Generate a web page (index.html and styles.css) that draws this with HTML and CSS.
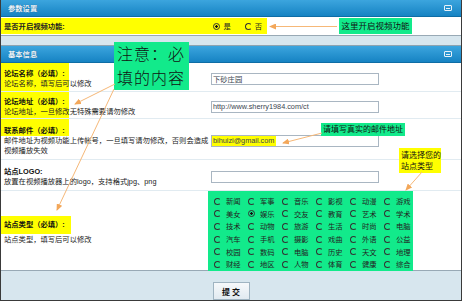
FILE: index.html
```
<!DOCTYPE html>
<html lang="zh-CN">
<head>
  <meta charset="UTF-8" />
  <title>参数设置</title>
  <link rel="stylesheet" href="styles.css">
</head>
<body>
<div class="page">

  <div class="bar"><span>参数设置</span><i class="fold"></i></div>
  <div class="switch">
    <div class="switch-hl">
      <b>是否开启视频功能:</b>
      <span class="opt"><i class="rd on"></i>是</span>
      <span class="opt"><i class="rd"></i>否</span>
    </div>
  </div>

  <div class="band"></div>

  <div class="bar"><span>基本信息</span><i class="fold"></i></div>

  <div class="req">
    <div class="row r1">
      <div class="lbl"><b>论坛名称（必填）:</b><p>论坛名称，填写后可以修改</p></div>
      <div class="field">下砂庄园</div>
    </div>
    <div class="row r2">
      <div class="lbl"><b>论坛地址（必填）:</b><p>论坛地址，一旦修改无特殊需要请勿修改</p></div>
      <div class="field">http://www.sherry1984.com/ct</div>
    </div>
    <div class="row r3">
      <div class="lbl"><b>联系邮件（必填）:</b><p>邮件地址为视频功能上传帐号，一旦填写请勿修改，否则会造成<br>视频播放失效</p></div>
      <div class="field"><span class="mark">bihuizi@gmail.com</span></div>
    </div>
  </div>

  <div class="row r4">
    <div class="lbl"><b>站点LOGO:</b><p>放置在视频播放器上的logo，支持格式jpg、png</p></div>
    <div class="field"></div>
  </div>

  <div class="row r5">
    <div class="lbl"><b class="hl">站点类型（必填）:</b><p>站点类型，填写后可以修改</p></div>
    <div class="types">
      <span class="opt"><i class="rd"></i>新闻</span>
      <span class="opt"><i class="rd"></i>军事</span>
      <span class="opt"><i class="rd"></i>音乐</span>
      <span class="opt"><i class="rd"></i>影视</span>
      <span class="opt"><i class="rd"></i>动漫</span>
      <span class="opt"><i class="rd"></i>游戏</span>
      <span class="opt"><i class="rd"></i>美女</span>
      <span class="opt"><i class="rd on"></i>娱乐</span>
      <span class="opt"><i class="rd"></i>交友</span>
      <span class="opt"><i class="rd"></i>教育</span>
      <span class="opt"><i class="rd"></i>艺术</span>
      <span class="opt"><i class="rd"></i>学术</span>
      <span class="opt"><i class="rd"></i>技术</span>
      <span class="opt"><i class="rd"></i>动物</span>
      <span class="opt"><i class="rd"></i>旅游</span>
      <span class="opt"><i class="rd"></i>生活</span>
      <span class="opt"><i class="rd"></i>时尚</span>
      <span class="opt"><i class="rd"></i>电脑</span>
      <span class="opt"><i class="rd"></i>汽车</span>
      <span class="opt"><i class="rd"></i>手机</span>
      <span class="opt"><i class="rd"></i>摄影</span>
      <span class="opt"><i class="rd"></i>戏曲</span>
      <span class="opt"><i class="rd"></i>外语</span>
      <span class="opt"><i class="rd"></i>公益</span>
      <span class="opt"><i class="rd"></i>校园</span>
      <span class="opt"><i class="rd"></i>数码</span>
      <span class="opt"><i class="rd"></i>电脑</span>
      <span class="opt"><i class="rd"></i>历史</span>
      <span class="opt"><i class="rd"></i>天文</span>
      <span class="opt"><i class="rd"></i>地理</span>
      <span class="opt"><i class="rd"></i>财经</span>
      <span class="opt"><i class="rd"></i>地区</span>
      <span class="opt"><i class="rd"></i>人物</span>
      <span class="opt"><i class="rd"></i>体育</span>
      <span class="opt"><i class="rd"></i>健康</span>
      <span class="opt"><i class="rd"></i>综合</span>
    </div>
  </div>

  <div class="foot"><button class="submit">提 交</button></div>

  <!-- annotations -->
  <div class="note">注意：必<br>填的内容</div>
  <div class="tip tip-video">这里开启视频功能</div>
  <div class="tip tip-mail">请填写真实的邮件地址</div>
  <div class="tip tip-type">请选择您的<br>站点类型</div>

  <svg class="arrows" width="462" height="301" viewBox="0 0 462 301">
    <defs>
      <marker id="ah" markerWidth="7" markerHeight="6" refX="6" refY="3" orient="auto" markerUnits="userSpaceOnUse">
        <path d="M0,0 L7,3 L0,6 z" fill="#f3a75a"/>
      </marker>
    </defs>
    <g stroke="#f6b878" stroke-width="1" fill="none" marker-end="url(#ah)">
      <path d="M336,26.5 L269,26.5"/>
      <path d="M114,84 L74,104"/>
      <path d="M113,89 L56,210"/>
      <path d="M321,133 L282,143"/>
      <path d="M421,172 L405,190"/>
    </g>
  </svg>
</div>
</body>
</html>
```
FILE: styles.css
```
body {
  margin: 0;
  font-family: "Liberation Sans", "Noto Sans CJK SC", sans-serif;
  font-size: 7.3px;
  color: #222;
  background: #fff;
}
p {
  margin: 0;
  white-space: nowrap;
}
.page {
  position: relative;
  width: 462px;
  height: 301px;
  box-sizing: border-box;
  border: 1px solid #3a3a3a;
  border-top: none;
  overflow: hidden;
  background: #fff;
}

/* blue section bars */
.bar {
  height: 17px;
  box-sizing: border-box;
  display: flex;
  align-items: center;
  justify-content: space-between;
  padding: 0 9px 0 7px;
  background: linear-gradient(#3ca5de, #1683c3);
  border-bottom: 1px solid #0e6da5;
  color: #eef4fa;
  font-weight: bold;
  text-shadow: 0 0 1px #0b5d8c;
}
.fold {
  width: 8px;
  height: 6px;
  box-sizing: border-box;
  border: 1px solid #e8f1f8;
  border-radius: 1px;
  display: flex;
  align-items: center;
  justify-content: center;
}
.fold::after {
  content: "";
  width: 4px;
  height: 1px;
  background: #e8f1f8;
}

/* video switch */
.switch {
  height: 19px;
  box-sizing: border-box;
  padding-top: 1px;
  border-bottom: 1px solid #98a9b5;
}
.switch-hl {
  width: 266px;
  height: 16px;
  background: #ff0;
  display: flex;
  align-items: center;
  padding-left: 3px;
  box-sizing: border-box;
}
.switch-hl b {
  flex: 1;
}
.switch-hl .opt {
  margin-right: 14px;
}
.switch-hl .opt:last-child {
  margin-right: 5px;
}

.band {
  height: 10px;
  box-sizing: border-box;
  background: #d7e6ee;
  border-bottom: 1px solid #8da3b0;
}

/* form rows */
.req {
  background: linear-gradient(#ff0, #ff0) no-repeat 0 0 / 68px 73px;
}
.row {
  display: grid;
  grid-template-columns: 207px 1fr;
  align-items: center;
  box-sizing: border-box;
  border-bottom: 1px solid #e1ebf1;
  padding-top: 3px;
}
.r1 { height: 29px; }
.r2 { height: 27px; }
.r3 { height: 41px; }
.r4 { height: 31px; }
.r5 {
  height: 80px;
  padding-top: 0;
  border-bottom: 1px solid #98a9b5;
}
.lbl {
  padding-left: 3px;
  line-height: 10px;
}
.lbl b {
  display: block;
  color: #111;
}
.lbl .hl {
  width: 70px;
  margin-left: -3px;
  padding: 4px 3px;
  box-sizing: border-box;
  background: #ff0;
  margin-bottom: 1px;
}

.field {
  width: 168px;
  height: 12px;
  margin-left: 3px;
  box-sizing: border-box;
  border: 1px solid #a9b6c2;
  display: flex;
  align-items: center;
  padding-left: 1px;
  color: #3a4550;
  background: #fff;
}
.field .mark {
  align-self: stretch;
  display: flex;
  align-items: center;
  background: #ff0;
  margin-left: -1px;
  padding: 0 2px 0 1px;
}

/* radios */
.opt {
  display: inline-flex;
  align-items: center;
  gap: 3px;
  white-space: nowrap;
}
.rd {
  display: inline-block;
  width: 7px;
  height: 7px;
  box-sizing: border-box;
  border-radius: 50%;
  border: 1px solid;
  border-color: #333 transparent #333 #333;
}
.rd.on {
  border-color: #333;
  background: radial-gradient(circle, #111 1px, transparent 1.5px);
}

.types {
  align-self: stretch;
  width: 205px;
  box-sizing: border-box;
  background: #12ea8b;
  padding: 4px 0 0 6px;
  display: grid;
  grid-template-columns: repeat(6, 34px);
  grid-auto-rows: 12.6px;
  align-items: center;
}
.types .opt {
  gap: 5px;
}

/* footer */
.foot {
  height: 29px;
  box-sizing: border-box;
  background: #d7e6ee;
  display: flex;
  justify-content: center;
  padding-top: 11px;
}
.submit {
  width: 37px;
  height: 18px;
  padding: 0;
  border: 1px solid #9fb4c1;
  background: linear-gradient(#f6f9fb, #e1eaf0);
  font-family: "Liberation Sans", "Noto Sans CJK SC", sans-serif;
  font-size: 8px;
  font-weight: bold;
  color: #111;
}

/* annotations laid over the form */
.note {
  position: absolute;
  left: 113px;
  top: 42px;
  width: 75px;
  height: 48px;
  box-sizing: border-box;
  padding: 1px 0 0 3px;
  background: #12ea8b;
  font-size: 16px;
  font-weight: 300;
  line-height: 24px;
  letter-spacing: 1px;
  color: #111;
}
.tip {
  position: absolute;
  color: #111;
  font-size: 8px;
  line-height: 10px;
}
.tip-video {
  left: 338px;
  top: 18px;
  width: 73px;
  height: 16px;
  background: #12ea8b;
  font-size: 8.5px;
  display: flex;
  align-items: center;
  justify-content: center;
}
.tip-mail {
  left: 320px;
  top: 123px;
  width: 84px;
  height: 13px;
  background: #12ea8b;
  display: flex;
  align-items: center;
  justify-content: center;
}
.tip-type {
  left: 398px;
  top: 148px;
  width: 42px;
  height: 25px;
  padding: 2px 0 0 2px;
  box-sizing: border-box;
  background: #ff0;
  line-height: 11px;
}
.arrows {
  position: absolute;
  left: 0;
  top: 0;
  pointer-events: none;
}
```
